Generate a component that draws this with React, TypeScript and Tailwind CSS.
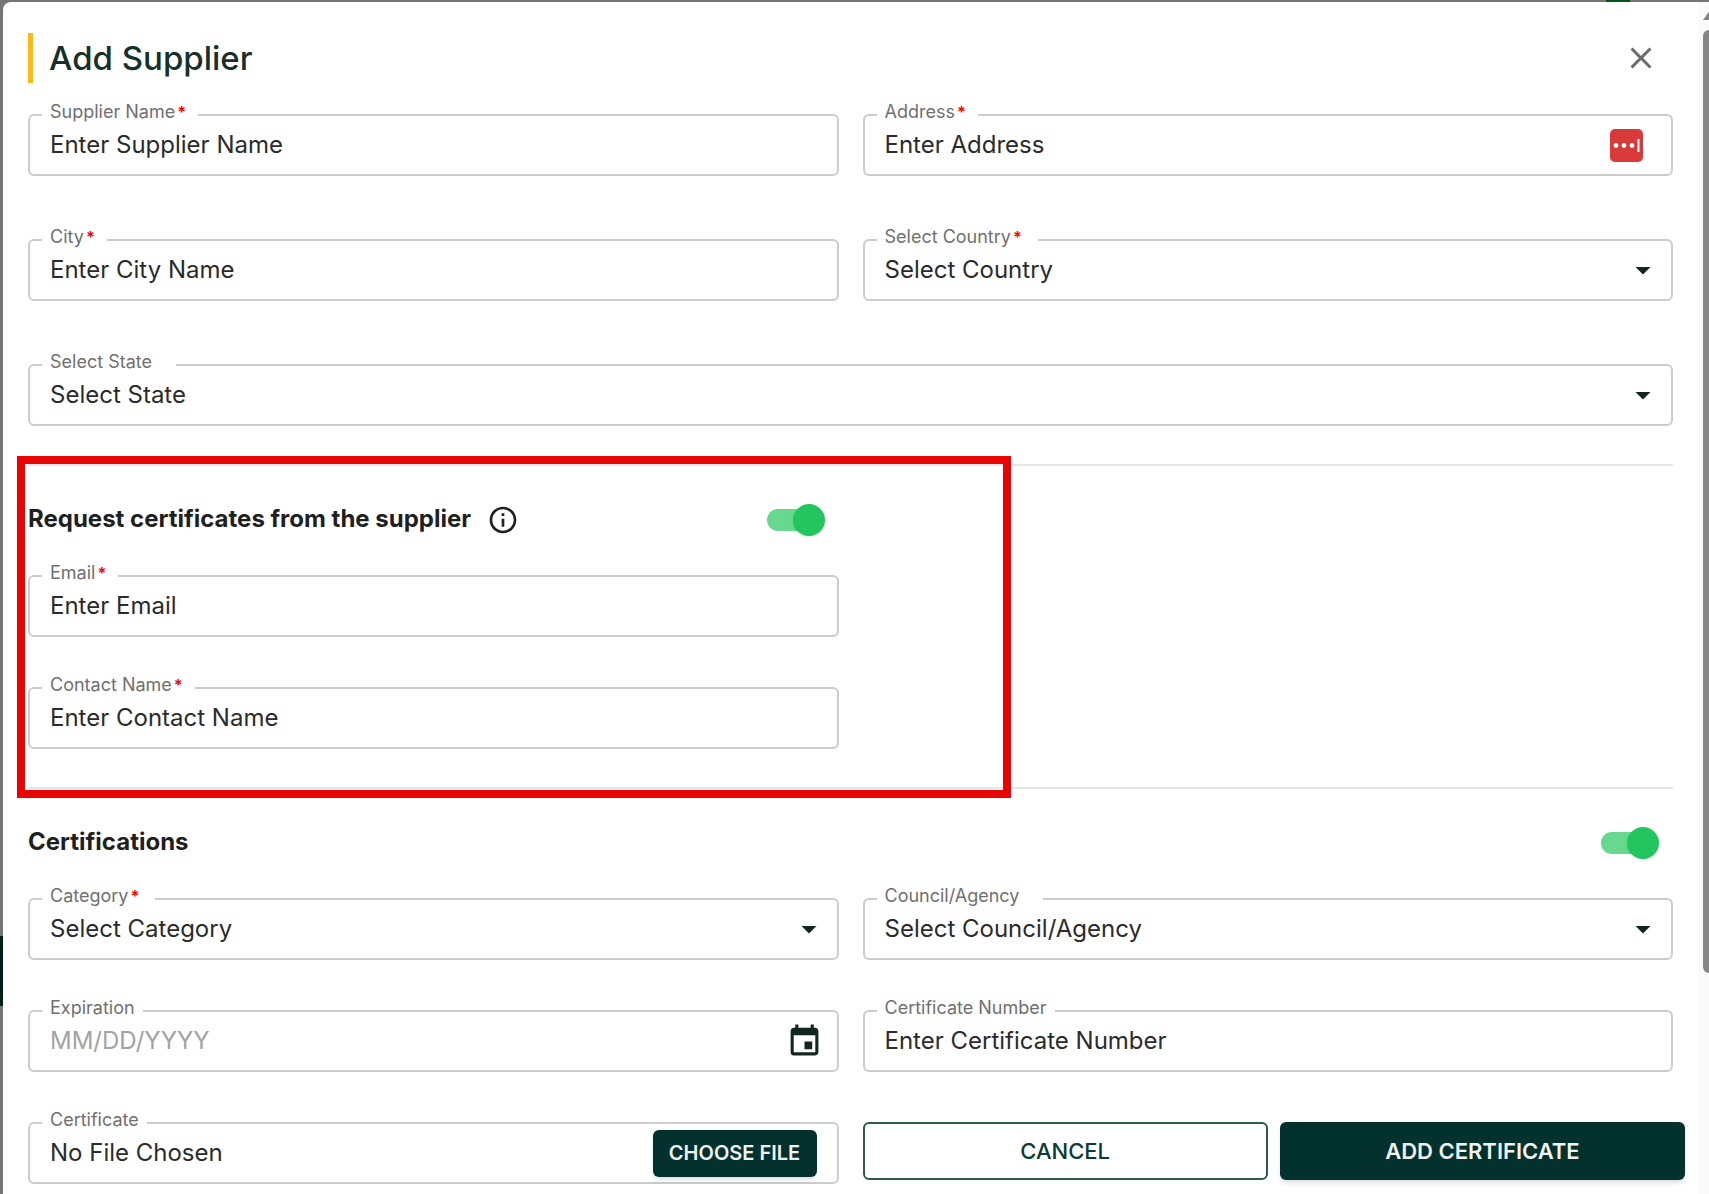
import React, { useState } from 'react';
import { MdArrowDropDown, MdClose, MdEvent, MdOutlineInfo } from 'react-icons/md';

type FieldProps = {
  id: string;
  label: string;
  required?: boolean;
  legendClass?: string;
  children: React.ReactNode;
};

const inputClass =
  'h-[34px] w-full min-w-0 flex-1 bg-transparent text-2xl leading-[34px] text-[#2b2b2b] placeholder:text-[#2b2b2b] placeholder:opacity-100 focus:outline-none';

const Field = ({ id, label, required, legendClass, children }: FieldProps) => (
  <fieldset className="h-[74px] min-w-0 rounded-md border-2 border-[#cccccc] pl-3">
    <legend className={`h-[26px] pl-2 text-lg leading-5 text-[#707070] ${legendClass ?? (required ? 'pr-3' : 'pr-2')}`}>
      <label htmlFor={id} className="flex whitespace-nowrap">
        {label}
        {required && <span className="pl-0.5 text-base leading-5 font-bold text-[#ff0000]">*</span>}
      </label>
    </legend>
    <div className="relative flex h-[34px] items-center pr-3.5 pl-2">{children}</div>
  </fieldset>
);

const TextField = ({ id, label, placeholder, required }: { id: string; label: string; placeholder: string; required?: boolean }) => (
  <Field id={id} label={label} required={required}>
    <input id={id} type="text" placeholder={placeholder} className={inputClass} />
  </Field>
);

const SelectField = ({ id, label, placeholder, required }: { id: string; label: string; placeholder: string; required?: boolean }) => (
  <Field id={id} label={label} required={required} legendClass={required ? 'pr-4' : 'pr-6'}>
    <select id={id} className={`${inputClass} appearance-none`}>
      <option>{placeholder}</option>
    </select>
    <MdArrowDropDown className="pointer-events-none absolute right-2.5 size-9 text-[#12261f]" />
  </Field>
);

const Toggle = ({ id, checked, onChange }: { id: string; checked: boolean; onChange: (value: boolean) => void }) => (
  <input
    id={id}
    type="checkbox"
    role="switch"
    checked={checked}
    onChange={(e) => onChange(e.target.checked)}
    className="relative h-8 w-[58px] shrink-0 cursor-pointer appearance-none before:absolute before:top-[5px] before:left-0 before:h-[22px] before:w-[54px] before:rounded-full before:bg-gray-300 after:absolute after:top-0 after:left-0 after:size-8 after:rounded-full after:bg-gray-100 after:shadow checked:before:bg-[#66d98f] checked:after:left-[26px] checked:after:bg-[#22c55e]"
  />
);

// Password manager badge shown inside the address box
const AutofillBadge = () => (
  <svg viewBox="0 0 33 33" className="mr-3.5 size-[33px] shrink-0" aria-hidden="true">
    <rect width="33" height="33" rx="5" fill="#d73a38" />
    <circle cx="6" cy="16.5" r="2.4" fill="#fff" />
    <circle cx="14" cy="16.5" r="2.4" fill="#fff" />
    <circle cx="22" cy="16.5" r="2.4" fill="#fff" />
    <rect x="27.5" y="10" width="2" height="13" fill="#fff" />
  </svg>
);

const App = () => {
  const [requestCertificates, setRequestCertificates] = useState(true);
  const [certifications, setCertifications] = useState(true);

  return (
    <div className="flex h-screen flex-col overflow-hidden bg-[#757575] font-['Inter',sans-serif]">
      {/* Page behind the dialog, seen along the top and left edges */}
      <div className="flex h-0.5 shrink-0 justify-end pr-[79px]">
        <div className="w-6 bg-[#04531f]" />
      </div>
      <div className="flex min-h-0 flex-1">
        <div className="w-[3px] shrink-0 pt-[934px]">
          <div className="h-[70px] bg-[#021f1b]" />
        </div>

        <div role="dialog" aria-labelledby="dialog-title" className="flex min-w-0 flex-1 overflow-hidden rounded-tl-lg bg-white">
          <form className="min-w-0 flex-1 px-[25px] pt-[31px]" onSubmit={(e) => e.preventDefault()}>
            <div className="flex h-[50px] items-center justify-between border-l-5 border-[#fdb913] pr-3.5 pl-4">
              <h1 id="dialog-title" className="text-[33px] leading-10 font-medium text-[#173029]">
                Add Supplier
              </h1>
              <button type="button" aria-label="Close" className="text-[#6b6b6b]">
                <MdClose className="size-9" />
              </button>
            </div>

            <div className="mt-[19px] grid grid-cols-2 gap-x-6 gap-y-[51px]">
              <TextField id="supplier-name" label="Supplier Name" placeholder="Enter Supplier Name" required />
              <Field id="address" label="Address" required>
                <input id="address" type="text" placeholder="Enter Address" className={inputClass} />
                <AutofillBadge />
              </Field>
              <TextField id="city" label="City" placeholder="Enter City Name" required />
              <SelectField id="country" label="Select Country" placeholder="Select Country" required />
              <div className="col-span-2">
                <SelectField id="state" label="Select State" placeholder="Select State" />
              </div>
            </div>

            <section className="relative mt-[38px] h-[325px] border-y-2 border-[#e6e6e6]">
              <div className="grid grid-cols-2 gap-x-6">
                <div className="pt-[38px]">
                  <div className="flex h-8 items-center pr-3.5">
                    <label htmlFor="request-certificates" className="pb-0.5 text-2xl leading-7 font-bold text-[#1f1f1f]">
                      Request certificates from the supplier
                    </label>
                    <MdOutlineInfo className="ml-4 size-8 shrink-0 text-[#1f1f1f]" />
                    <div className="ml-auto flex">
                      <Toggle id="request-certificates" checked={requestCertificates} onChange={setRequestCertificates} />
                    </div>
                  </div>
                  <div className="mt-[27px] flex flex-col gap-[38px]">
                    <TextField id="email" label="Email" placeholder="Enter Email" required />
                    <TextField id="contact-name" label="Contact Name" placeholder="Enter Contact Name" required />
                  </div>
                </div>
              </div>
              {/* Highlight around the request section */}
              <div className="pointer-events-none absolute -top-[10px] -bottom-[11px] -left-[11px] w-[994px] border-8 border-[#e90505]" />
            </section>

            <div className="mt-[38px] flex h-8 items-center justify-between pr-3.5">
              <label htmlFor="certifications" className="pb-0.5 text-2xl leading-7 font-bold text-[#1f1f1f]">
                Certifications
              </label>
              <Toggle id="certifications" checked={certifications} onChange={setCertifications} />
            </div>

            <div className="mt-[27px] grid grid-cols-2 gap-x-6 gap-y-[38px]">
              <SelectField id="category" label="Category" placeholder="Select Category" required />
              <SelectField id="council" label="Council/Agency" placeholder="Select Council/Agency" />
              <Field id="expiration" label="Expiration">
                <input
                  id="expiration"
                  type="text"
                  placeholder="MM/DD/YYYY"
                  className="h-[34px] w-full min-w-0 flex-1 bg-transparent text-2xl leading-[34px] text-[#2b2b2b] placeholder:text-[#a3a3a3] focus:outline-none"
                />
                <button type="button" aria-label="Pick a date" className="text-[#12261f]">
                  <MdEvent className="size-[37px]" />
                </button>
              </Field>
              <TextField id="certificate-number" label="Certificate Number" placeholder="Enter Certificate Number" />
              <Field id="certificate" label="Certificate">
                <input id="certificate" type="text" readOnly placeholder="No File Chosen" className={inputClass} />
                <button
                  type="button"
                  className="mr-1.5 h-[47px] w-[164px] shrink-0 rounded-md bg-[#03312d] text-xl font-semibold text-[#f2f2f2] shadow-md"
                >
                  CHOOSE FILE
                </button>
              </Field>
              <div className="-mr-3 grid grid-cols-2 gap-3 pt-3">
                <button type="button" className="h-[58px] rounded-md border-2 border-[#2a5a52] text-[22px] font-medium text-[#0b3b35]">
                  CANCEL
                </button>
                <button type="submit" className="h-[58px] rounded-md bg-[#03312d] text-[22px] font-semibold text-[#f2f2f2] shadow-md">
                  ADD CERTIFICATE
                </button>
              </div>
            </div>
          </form>

          {/* Scrollbar */}
          <div className="w-[11px] shrink-0 overflow-hidden bg-[#fafafa] pt-2 pl-[5px]">
            <svg viewBox="0 0 14 10" className="h-2.5 w-3.5 max-w-none" aria-hidden="true">
              <path d="M7 0 14 10H0z" fill="#858585" />
            </svg>
            <div className="mt-[10px] h-[943px] w-3 rounded-full bg-[#858585]" />
          </div>
        </div>
      </div>
    </div>
  );
};

export default App;
